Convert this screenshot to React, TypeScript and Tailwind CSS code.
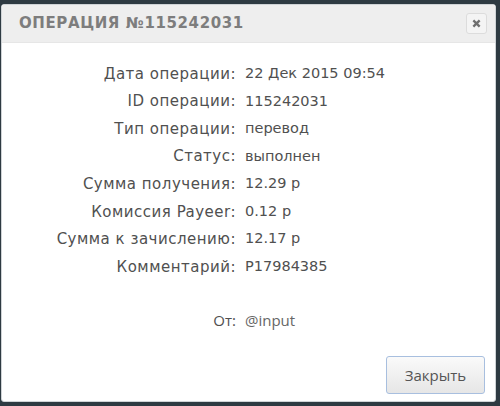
const rows: [string, string][] = [
  ['Дата операции:', '22 Дек 2015 09:54'],
  ['ID операции:', '115242031'],
  ['Тип операции:', 'перевод'],
  ['Статус:', 'выполнен'],
  ['Сумма получения:', '12.29 р'],
  ['Комиссия Payeer:', '0.12 р'],
  ['Сумма к зачислению:', '12.17 р'],
  ['Комментарий:', 'P17984385'],
];

const App = () => {
  return (
    <div className="h-[406px] w-[500px] bg-[#2e3a42] pt-[4px] pl-[1px] pr-[4px] pb-[4px] font-['DejaVu_Sans',sans-serif]">
      <div className="flex h-full flex-col rounded-[3px] border border-[#cfd3d6] bg-white">
        <div className="flex h-[38px] items-center justify-between border-b border-[#e6e6e6] bg-[#eeeeee] pl-[17px] pr-[8px]">
          <h1 className="text-[15px] font-bold tracking-[0.6px] text-[#7d7d7d]">
            ОПЕРАЦИЯ №115242031
          </h1>
          <button className="flex h-[21px] w-[21px] items-center justify-center rounded-[3px] border border-[#dcdcdc] bg-[#f4f4f4]">
            <svg width="9" height="9" viewBox="0 0 10 10">
              <path
                d="M1.5 1.5 L8.5 8.5 M8.5 1.5 L1.5 8.5"
                stroke="#6f6f6f"
                strokeWidth="2.6"
              />
            </svg>
          </button>
        </div>
        <div className="flex flex-col pt-[17px] text-[15px] text-[#505050]">
          {rows.map(([label, value]) => (
            <div className="flex h-[27.6px] items-center" key={label}>
              <span className="w-[234px] text-right tracking-[0.5px]">{label}</span>
              <span className="pl-[9px] text-[14.5px]">{value}</span>
            </div>
          ))}
          <div className="mt-[25px] flex h-[28px] items-center font-['Open_Sans',sans-serif]">
            <span className="w-[234px] text-right">От:</span>
            <span className="pl-[9px] text-[#666]">@input</span>
          </div>
        </div>
        <div className="mt-auto flex justify-end pr-[10px] pb-[7px]">
          <button className="h-[38px] w-[99px] rounded-[3px] border border-[#a8bfdf] bg-gradient-to-b from-[#fafafa] to-[#e6e6e6] font-['Open_Sans',sans-serif] text-[15px] text-[#555]">
            Закрыть
          </button>
        </div>
      </div>
    </div>
  );
};

export default App;
